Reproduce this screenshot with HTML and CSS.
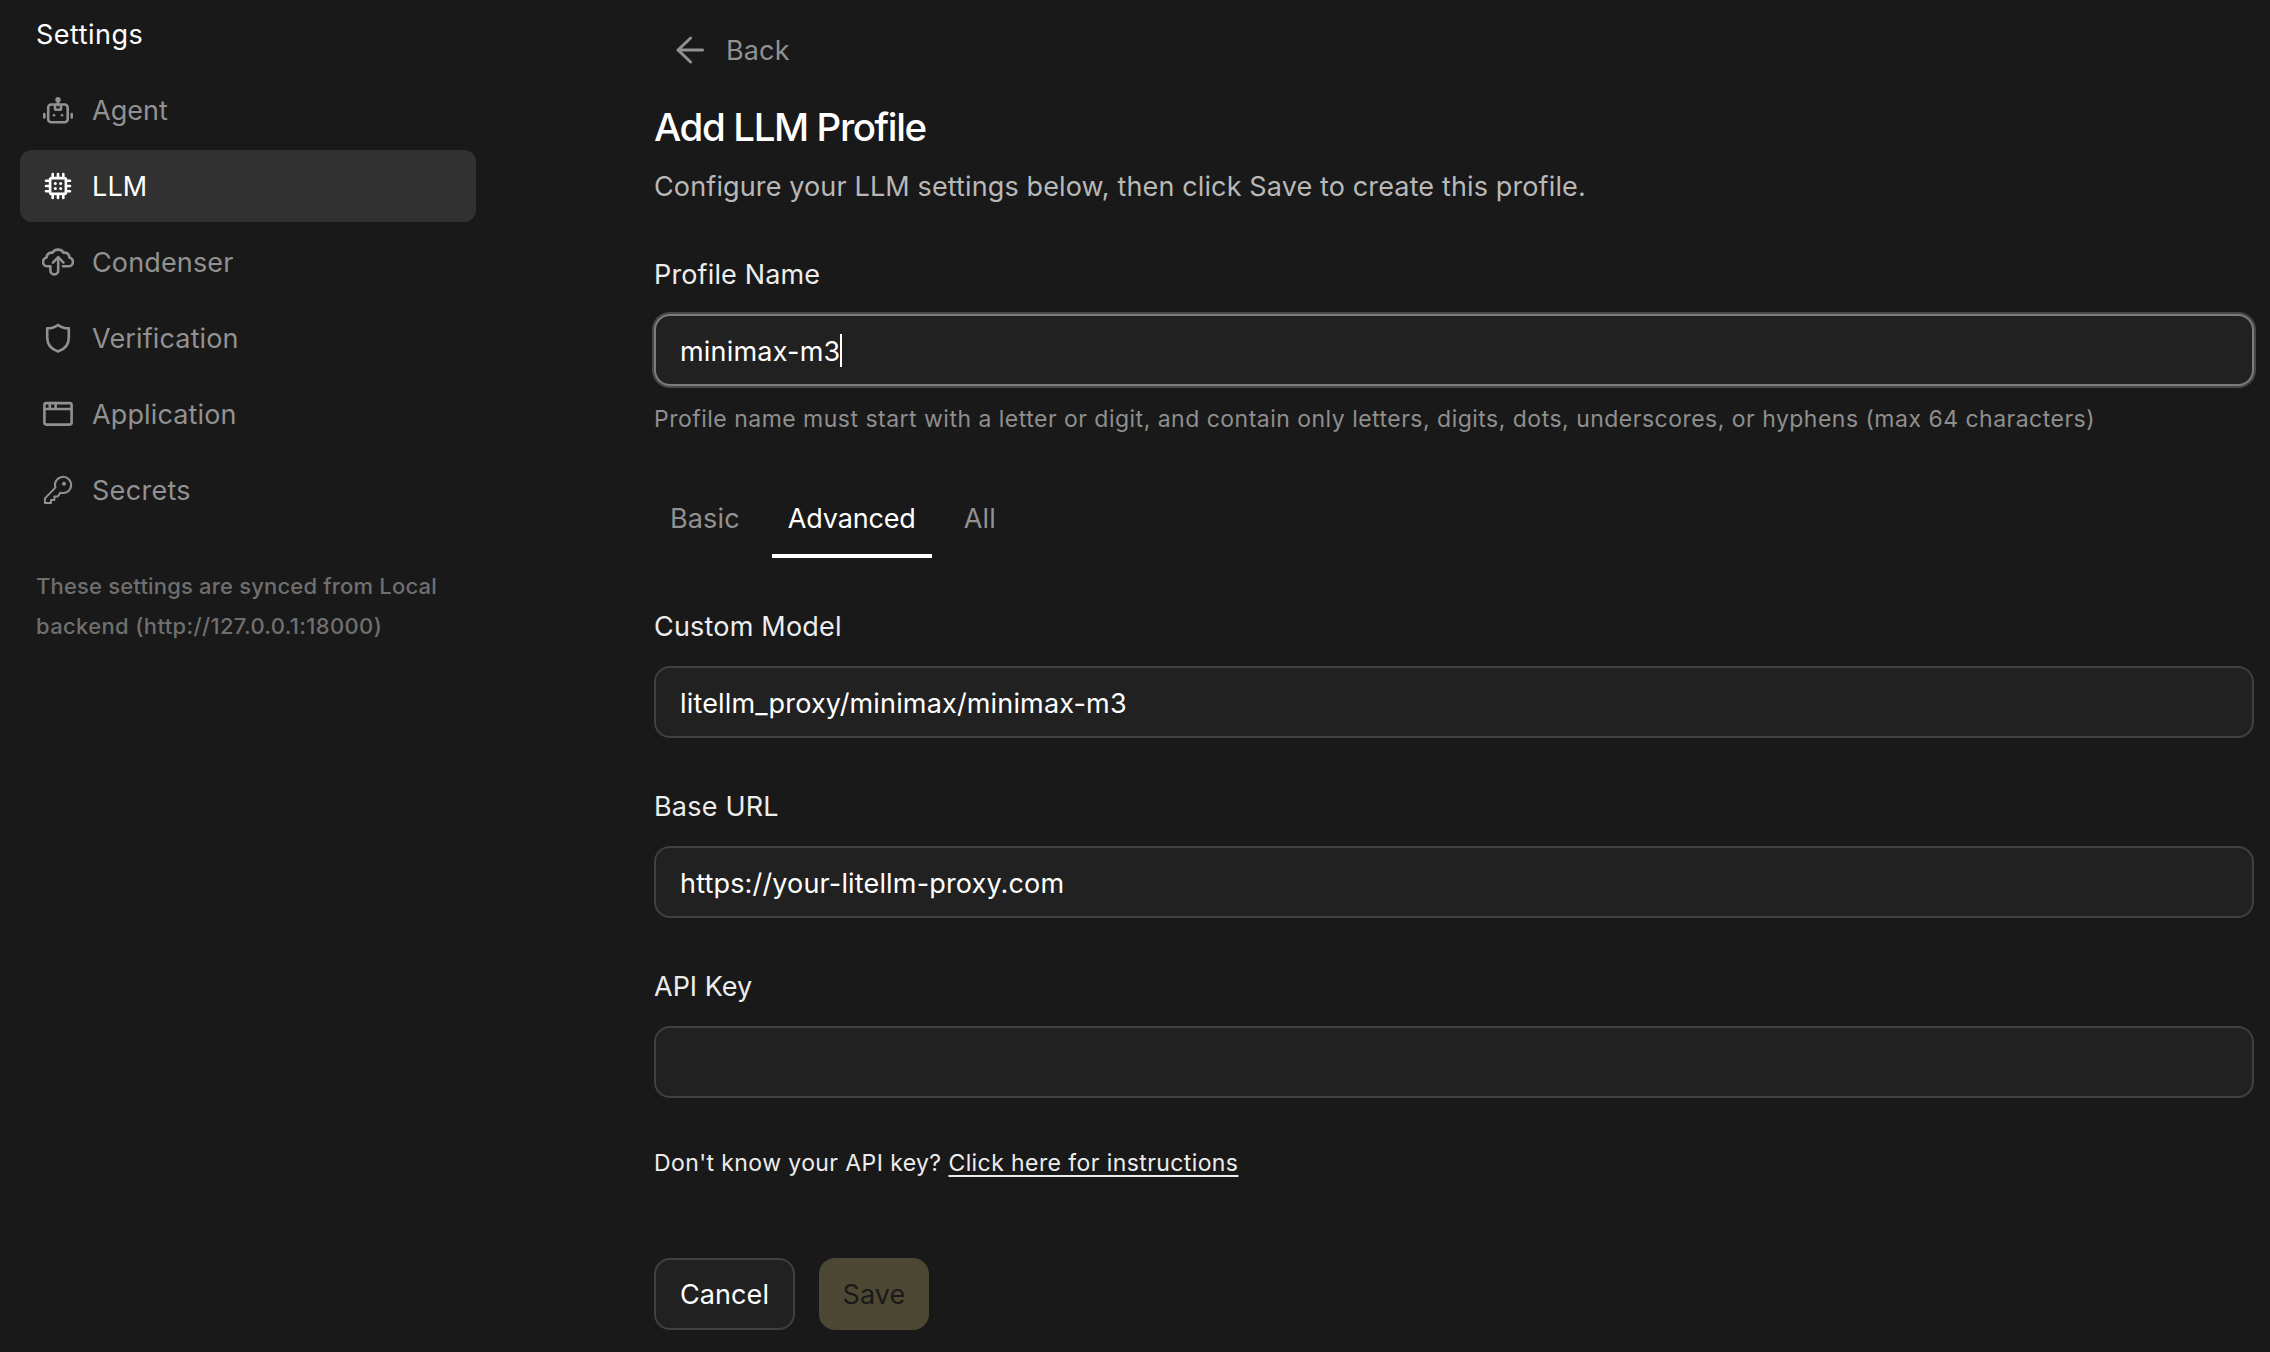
FILE: index.html
```html
<!DOCTYPE html>
<html lang="en">
<head>
<meta charset="UTF-8">
<meta name="viewport" content="width=device-width, initial-scale=1.0">
<title>LLM Settings</title>
<link rel="stylesheet" href="styles.css">
</head>
<body>

<div class="layout">
    <aside class="sidebar">
        <h2 class="sidebar-title">Settings</h2>
        <nav class="nav">
            <a class="nav-item nav-agent">
                <svg class="icon" viewBox="0 0 32 32">
                    <rect x="6.2" y="10.5" width="19.5" height="17.7" rx="3"/>
                    <path d="M16 6v5M13 11.5v3q0 1.3 1.3 1.3h3.4q1.3 0 1.3-1.3v-3M2.3 20v3.4M29.7 20v3.4"/>
                    <circle class="dot" cx="16" cy="5.7" r="2.7"/>
                    <circle class="dot" cx="12" cy="21.3" r="1.3"/>
                    <circle class="dot" cx="20" cy="21.3" r="1.3"/>
                </svg>
                <span>Agent</span>
            </a>
            <a class="nav-item active">
                <svg class="icon" viewBox="0 0 32 32">
                    <rect x="8.1" y="8.1" width="15.8" height="15.8" rx="1.5"/>
                    <path d="M10.7 8V4M16 8V4M21.3 8V4M10.7 28V24M16 28V24M21.3 28V24M8 10.7H4M8 16H4M8 21.3H4M28 10.7H24M28 16H24M28 21.3H24"/>
                    <circle class="dot" cx="13.3" cy="13.4" r="1.5"/>
                    <circle class="dot" cx="18.7" cy="13.4" r="1.5"/>
                    <circle class="dot" cx="13.3" cy="18.6" r="1.5"/>
                    <circle class="dot" cx="18.7" cy="18.6" r="1.5"/>
                </svg>
                <span>LLM</span>
            </a>
            <a class="nav-item">
                <svg class="icon" viewBox="0 0 32 32">
                    <path d="M20.9 20.3H26.4a4.5 4.5 0 0 0 1-8.9C27.4 8.5 25 6.3 21.4 6.7 20.5 4.7 18.5 3.6 16 3.6S11.5 4.7 10.6 6.7C7 6.3 4.6 8.5 4.6 11.4a4.5 4.5 0 0 0 1 8.9h2.8v4.4a3.9 3.7 0 0 0 7.8 0V12"/>
                    <path d="M10.9 16.6 16.2 11.2l5.3 5.4"/>
                </svg>
                <span>Condenser</span>
            </a>
            <a class="nav-item">
                <svg class="icon" viewBox="0 0 32 32">
                    <path d="M16 2.9C13.5 5 9.5 6.3 5.2 6.3v9.2c0 7 4.5 11.9 10.8 14 6.3-2.1 10.8-7 10.8-14V6.3C22.5 6.3 18.5 5 16 2.9z"/>
                </svg>
                <span>Verification</span>
            </a>
            <a class="nav-item">
                <svg class="icon" viewBox="0 0 32 32">
                    <rect x="2.4" y="5.1" width="27.2" height="21.5" rx="2"/>
                    <path d="M2.4 11h27.2M7.8 5.1V11M13.6 5.1V11"/>
                </svg>
                <span>Application</span>
            </a>
            <a class="nav-item nav-secrets">
                <svg class="icon thin" viewBox="0 0 32 32">
                    <path d="M13.4 13.6 2.9 24.4v4.7H9V26h3.4v-3.6h3.4l2.6-3.8A8.1 8.1 0 1 0 13.4 13.6z"/>
                    <circle class="dot" cx="22" cy="9.8" r="2"/>
                </svg>
                <span>Secrets</span>
            </a>
        </nav>
        <p class="sync-note">These settings are synced from Local <span class="backend">backend (http://127.0.0.1:18000)</span></p>
    </aside>

    <main class="content">
        <a class="back">
            <svg class="icon" viewBox="0 0 32 32">
                <path d="M28.6 16H4M16.6 4 4 16l12.6 12"/>
            </svg>
            <span>Back</span>
        </a>
        <h1 class="title">Add LLM Profile</h1>
        <p class="subtitle">Configure your LLM settings below, then click Save to create this profile.</p>

        <div class="field">
            <label class="label">Profile Name</label>
            <div class="input focused"><span class="value">minimax-m3</span><span class="caret"></span></div>
            <p class="help">Profile name must start with a letter or digit, and contain only letters, digits, dots, underscores, or hyphens (max 64 characters)</p>
        </div>

        <div class="tabs">
            <a class="tab">Basic</a>
            <a class="tab selected">Advanced</a>
            <a class="tab">All</a>
        </div>

        <div class="field">
            <label class="label wide">Custom Model</label>
            <div class="input"><span>litellm_proxy/minimax/minimax-m3</span></div>
        </div>
        <div class="field">
            <label class="label wide">Base URL</label>
            <div class="input"><span>https://your-litellm-proxy.com</span></div>
        </div>
        <div class="field">
            <label class="label api">API Key</label>
            <div class="input"></div>
        </div>

        <p class="key-help">Don't know your API key? <a class="link">Click here for instructions</a></p>

        <div class="actions">
            <button class="btn cancel">Cancel</button>
            <button class="btn save" disabled>Save</button>
        </div>
    </main>
</div>

</body>
</html>
```
FILE: styles.css
```css
* {
    box-sizing: border-box;
}

body {
    margin: 0;
    background: #191919;
    color: #fff;
    font-family: Inter, "Liberation Sans", sans-serif;
    font-size: 27px;
    line-height: 42px;
    letter-spacing: 0.14px;
}

h1, h2, p {
    margin: 0;
    font-weight: 400;
}

.layout {
    display: flex;
    min-height: 100vh;
}

/* Sidebar */
.sidebar {
    width: 496px;
    padding: 14px 20px 0;
    flex-shrink: 0;
}

.sidebar-title {
    font-size: 27px;
    padding-left: 16px;
    letter-spacing: 0.5px;
}

.nav {
    display: flex;
    flex-direction: column;
    gap: 4px;
    margin-top: 18px;
}

.nav-item {
    display: flex;
    align-items: center;
    gap: 18px;
    height: 72px;
    padding: 0 22px;
    border-radius: 12px;
    color: #919191;
}

.nav-item span,
.back span {
    padding-top: 2px;
}

.nav-item.active {
    background: #313131;
    color: #fff;
}

.nav-agent {
    letter-spacing: 0;
}

.nav-secrets {
    letter-spacing: 0.3px;
}

.icon {
    width: 32px;
    height: 32px;
    fill: none;
    stroke: currentColor;
    stroke-width: 2.6;
    stroke-linecap: round;
    stroke-linejoin: round;
}

.icon.thin {
    stroke-width: 2;
}

.icon .dot {
    fill: currentColor;
    stroke: none;
}

.sync-note {
    margin-top: 40px;
    padding: 0 16px;
    font-size: 22px;
    line-height: 40px;
    font-weight: 500;
    letter-spacing: 0.18px;
    color: #6f6f6f;
}

.backend {
    display: block;
    letter-spacing: 0.35px;
}

/* Content */
.content {
    flex: 1;
    padding: 14px 16px 0 158px;
}

.back {
    display: flex;
    align-items: center;
    gap: 20px;
    height: 72px;
    padding-left: 20px;
    color: #919191;
}

.back .icon {
    stroke-width: 3;
}

.title {
    margin-top: 17px;
    font-size: 38.5px;
    line-height: 48px;
    font-weight: 500;
    letter-spacing: -1.4px;
}

.subtitle {
    margin-top: 15px;
    letter-spacing: 0.13px;
    color: #b8b8b8;
}

.field {
    margin-top: 48px;
}

.subtitle + .field {
    margin-top: 46px;
}

.label {
    display: block;
    margin-bottom: 18px;
    color: #ededed;
}

.label.wide {
    letter-spacing: 0.2px;
}

.label.api {
    letter-spacing: 0;
}

.input {
    display: flex;
    align-items: center;
    height: 72px;
    padding: 3px 24px 0;
    border: 2px solid #404040;
    border-radius: 16px;
    background: #212121;
    letter-spacing: 0.16px;
}

.input.focused {
    border-color: #7c7c7c;
    box-shadow: 0 0 0 2px #484848;
}

.value {
    letter-spacing: 0.2px;
}

.caret {
    width: 2px;
    height: 33px;
    margin-bottom: 2px;
    background: #fff;
}

.help {
    margin-top: 16px;
    font-size: 23px;
    line-height: 34px;
    letter-spacing: 0.485px;
    color: #8f8f8f;
}

.tabs {
    display: flex;
    gap: 16px;
    margin-top: 46px;
}

.tab {
    padding: 16px 16px 14px;
    border-bottom: 4px solid transparent;
    color: #919191;
}

.tab.selected {
    width: 160px;
    border-bottom-color: #fff;
    color: #fff;
    letter-spacing: -0.15px;
}

.key-help {
    margin-top: 48px;
    font-size: 23px;
    line-height: 34px;
    letter-spacing: 0.41px;
    color: #ededed;
}

.link {
    text-decoration: underline;
    text-decoration-thickness: 2px;
    text-underline-offset: 4px;
    text-decoration-skip-ink: none;
}

.actions {
    display: flex;
    gap: 24px;
    margin-top: 78px;
}

.btn {
    height: 72px;
    padding: 2px 0 0;
    border: 2px solid #404040;
    border-radius: 16px;
    background: #212121;
    color: #fff;
    font: inherit;
    letter-spacing: 0.1px;
}

.btn.cancel {
    width: 141px;
}

.btn.save {
    width: 110px;
    border: none;
    background: #4d4834;
    color: #191919;
}
```
